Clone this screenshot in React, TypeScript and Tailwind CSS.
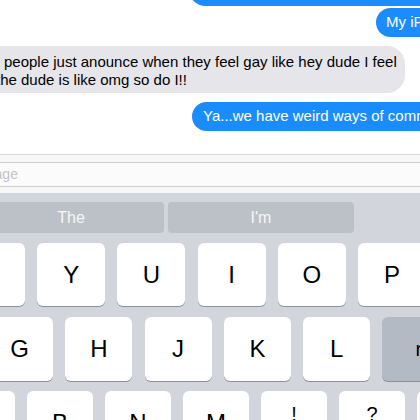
import React from "react";

const font = { fontFamily: '"Liberation Sans", Arial, sans-serif' };

interface KeyProps {
  label: string;
  sub?: string;
  w: string;
  dark?: boolean;
}

const Key: React.FC<KeyProps> = ({ label, sub, w, dark }) => {
  if (sub) {
    return (
      <div className={`${w} h-full shrink-0 rounded-[6px] bg-white shadow-[0_1px_0_#8d9096] flex flex-col items-center pt-[12px] text-[20px] leading-[22px] text-black`}>
        <span>{label}</span>
        <span>{sub}</span>
      </div>
    );
  }
  return (
    <div
      className={`${w} h-full shrink-0 rounded-[6px] shadow-[0_1px_0_#8d9096] flex items-center justify-center text-[24px] text-black ${
        dark ? "bg-[#b4bac4]" : "bg-white"
      }`}
    >
      {label}
    </div>
  );
};

export default function App() {
  return (
    <div className="w-[420px] h-[420px] overflow-hidden bg-white flex flex-col" style={font}>
      {/* conversation */}
      <div className="h-[154px] shrink-0 flex flex-col">
        <div className="h-[40px] -mt-[34px] ml-[188px] w-[300px] shrink-0 rounded-[18px] bg-[#1a8cfe]" />

        <div className="mt-[2px] ml-[376px] h-[29px] w-[120px] shrink-0 rounded-[15px] bg-[#1a8cfe] flex items-center pl-[10px] whitespace-nowrap text-[15px] text-white">
          My iPhone
        </div>

        <div className="mt-[9px] -ml-[40px] w-[445px] h-[47px] shrink-0 rounded-[18px] bg-[#e5e5ea] pt-[7px] text-[15px] leading-[18px] text-black whitespace-nowrap">
          <div className="pl-[44px]">people just anounce when they feel gay like hey dude I feel</div>
          <div className="pl-[36px]">the dude is like omg so do I!!</div>
        </div>

        <div className="mt-[9px] ml-[192px] h-[29px] w-[280px] shrink-0 rounded-[15px] bg-[#1a8cfe] flex items-center pl-[11px] whitespace-nowrap text-[15px] text-white">
          Ya...we have weird ways of communicating
        </div>
      </div>

      {/* input bar */}
      <div className="h-[39px] shrink-0 border-t border-[#d8d8dc] bg-[#f7f7f7] pt-[7px]">
        <div className="h-[25px] w-[520px] -ml-[60px] border border-[#cfcfd3] rounded-[6px] bg-[#fbfbfb] flex items-center text-[14px] text-[#c3c3c7] pl-[17px] whitespace-nowrap">
          iMessage
        </div>
      </div>

      {/* keyboard */}
      <div className="flex-1 bg-[#d2d5db] pt-[9px] flex flex-col">
        <div className="h-[31px] shrink-0 flex gap-[4px] -ml-[22px]">
          <div className="w-[186px] rounded-[4px] bg-[#bcc1c8] flex items-center justify-center text-[16px] text-[#f6f7f8]">
            The
          </div>
          <div className="w-[186px] rounded-[4px] bg-[#bcc1c8] flex items-center justify-center text-[16px] text-[#f6f7f8]">
            I'm
          </div>
        </div>

        <div className="mt-[10px] h-[63px] shrink-0 flex gap-[12.2px] -ml-[43px]">
          {["T", "Y", "U", "I", "O", "P"].map((k) => (
            <Key key={k} label={k} w="w-[68px]" />
          ))}
        </div>

        <div className="mt-[11px] h-[64px] shrink-0 flex gap-[12.3px] -ml-[14px]">
          {["G", "H", "J", "K", "L"].map((k) => (
            <Key key={k} label={k} w="w-[67px]" />
          ))}
          <div className="w-[120px] h-full shrink-0 rounded-[6px] bg-[#b4bac4] shadow-[0_1px_0_#8d9096] flex items-center pl-[33px] text-[20px] text-black">
            return
          </div>
        </div>

        <div className="mt-[10px] h-[63px] shrink-0 flex gap-[12px] -ml-[51px]">
          {["V", "B", "N", "M"].map((k) => (
            <Key key={k} label={k} w="w-[66px]" />
          ))}
          <Key label="!" sub="," w="w-[66px]" />
          <Key label="?" sub="." w="w-[66px]" />
          <Key label="" w="w-[66px]" />
        </div>
      </div>
    </div>
  );
}
